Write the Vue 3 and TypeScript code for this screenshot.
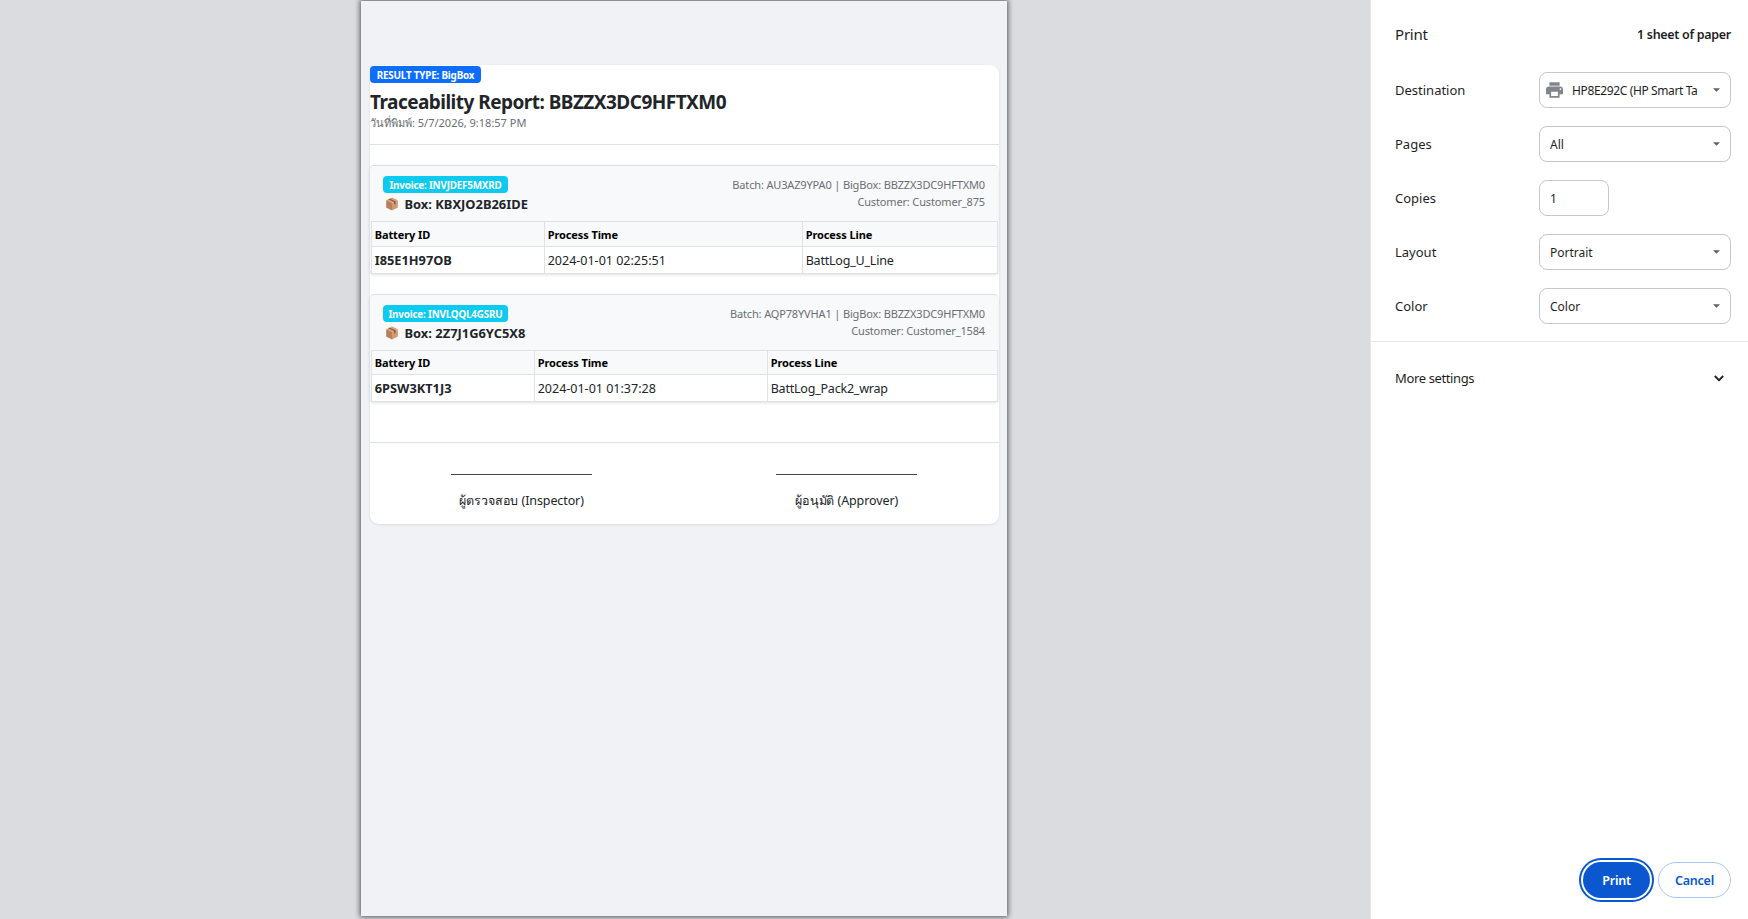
<script setup lang="ts">
interface BoxRecord {
  invoice: string
  box: string
  batch: string
  customer: string
  batteryId: string
  time: string
  line: string
}

interface Setting {
  label: string
  value: string
  kind: 'printer' | 'select' | 'input'
}

const bigBox = 'BBZZX3DC9HFTXM0'

const records: BoxRecord[] = [
  {
    invoice: 'INVJDEF5MXRD',
    box: 'KBXJO2B26IDE',
    batch: 'AU3AZ9YPA0',
    customer: 'Customer_875',
    batteryId: 'I85E1H97OB',
    time: '2024-01-01 02:25:51',
    line: 'BattLog_U_Line',
  },
  {
    invoice: 'INVLQQL4GSRU',
    box: '2Z7J1G6YC5X8',
    batch: 'AQP78YVHA1',
    customer: 'Customer_1584',
    batteryId: '6PSW3KT1J3',
    time: '2024-01-01 01:37:28',
    line: 'BattLog_Pack2_wrap',
  },
]

const settings: Setting[] = [
  { label: 'Destination', value: 'HP8E292C (HP Smart Ta', kind: 'printer' },
  { label: 'Pages', value: 'All', kind: 'select' },
  { label: 'Copies', value: '1', kind: 'input' },
  { label: 'Layout', value: 'Portrait', kind: 'select' },
  { label: 'Color', value: 'Color', kind: 'select' },
]
</script>

<template>
  <div class="dialog">
    <main class="preview">
      <div class="sheet">
        <article class="report">
          <header class="report-head">
            <span class="badge primary">RESULT TYPE: BigBox</span>
            <h1>Traceability Report: {{ bigBox }}</h1>
            <p class="printed">วันที่พิมพ์: 5/7/2026, 9:18:57 PM</p>
          </header>

          <section v-for="(r, i) in records" :key="r.box" class="block" :class="'block-' + i">
            <div class="block-head">
              <div class="block-id">
                <span class="badge info">Invoice: {{ r.invoice }}</span>
                <div class="box-name">
                  <svg class="parcel" viewBox="0 0 24 24">
                    <path d="M12 1 L22 5.5 L12 10 L2 5.5Z" fill="#d6a178" />
                    <path d="M2 5.5 L12 10 V23 L2 18Z" fill="#b87f5b" />
                    <path d="M12 10 L22 5.5 V18 L12 23Z" fill="#d09a72" />
                    <path d="M5.5 4 L15.5 8.5 V13 L18 12 V7.3 L8 2.8Z" fill="#8a5a40" />
                  </svg>
                  <span>Box: {{ r.box }}</span>
                </div>
              </div>
              <div class="block-meta">
                <div>Batch: {{ r.batch }} | BigBox: {{ bigBox }}</div>
                <div>Customer: {{ r.customer }}</div>
              </div>
            </div>
            <div class="grid">
              <div class="cell th">Battery ID</div>
              <div class="cell th">Process Time</div>
              <div class="cell th">Process Line</div>
              <div class="cell td strong">{{ r.batteryId }}</div>
              <div class="cell td">{{ r.time }}</div>
              <div class="cell td line-name">{{ r.line }}</div>
            </div>
          </section>

          <footer class="signatures">
            <div class="sign">
              <div class="rule"></div>
              <div>ผู้ตรวจสอบ (Inspector)</div>
            </div>
            <div class="sign">
              <div class="rule"></div>
              <div>ผู้อนุมัติ (Approver)</div>
            </div>
          </footer>
        </article>
      </div>
    </main>

    <aside class="panel">
      <header class="panel-head">
        <span class="panel-title">Print</span>
        <span class="count">1 sheet of paper</span>
      </header>
      <div class="settings">
        <div v-for="s in settings" :key="s.label" class="row">
          <span class="label">{{ s.label }}</span>
          <div class="control" :class="s.kind">
            <svg v-if="s.kind === 'printer'" class="printer-icon" viewBox="2 3 20 18">
              <path
                d="M19 8H5c-1.66 0-3 1.34-3 3v6h4v4h12v-4h4v-6c0-1.66-1.34-3-3-3zm-3 11H8v-5h8v5zm3-7c-.55 0-1-.45-1-1s.45-1 1-1 1 .45 1 1-.45 1-1 1zm-1-9H6v4h12V3z"
              />
            </svg>
            <span class="value">{{ s.value }}</span>
            <svg v-if="s.kind !== 'input'" class="arrow" viewBox="0 0 8 4">
              <path d="M0 0H8L4 4Z" />
            </svg>
          </div>
        </div>
      </div>
      <div class="more">
        <span>More settings</span>
        <svg class="chevron" viewBox="0 0 10 7"><path d="M.8 1 L5 5.2 L9.2 1" /></svg>
      </div>
      <div class="actions">
        <button class="btn print">Print</button>
        <button class="btn cancel">Cancel</button>
      </div>
    </aside>
  </div>
</template>

<style>
body {
  margin: 0;
  overflow: hidden;
}
</style>

<style scoped>
* {
  box-sizing: border-box;
}
.dialog {
  display: flex;
  width: 1748px;
  height: 919px;
  background: #fff;
  font-family: 'Noto Sans', 'Open Sans', sans-serif;
  color: #212529;
}
.preview {
  flex: 1;
  display: flex;
  padding: 1px 0 0 361px;
  background: #dadce0;
  border-right: 1px solid #e6e7ea;
  overflow: hidden;
}
.sheet {
  width: 646px;
  height: 915px;
  padding: 63.5px 8px 0 9px;
  background: #f0f2f5;
  box-shadow: 0 0 5px 1px rgba(50, 50, 55, 0.8);
}
.report {
  height: 459.5px;
  background: #fff;
  border-radius: 9px;
  box-shadow: 0 1px 3px rgba(0, 0, 0, 0.09);
  white-space: nowrap;
}
.report-head {
  height: 80px;
  padding-top: 1.5px;
  border-bottom: 1px solid #dee2e6;
}
.badge {
  display: block;
  height: 17px;
  border-radius: 4px;
  color: #fff;
  font-size: 9.9px;
  font-weight: 700;
  line-height: 19px;
  letter-spacing: -0.2px;
  text-align: center;
}
.primary {
  width: 111px;
  background: #0d6efd;
}
h1 {
  margin: 7px 0 0;
  font-size: 19px;
  line-height: 25px;
  font-weight: 700;
  letter-spacing: -0.53px;
}
.printed {
  margin: 0;
  font-size: 11px;
  line-height: 16px;
  color: #6a6f75;
}
.block {
  width: 628px;
  height: 108px;
  margin-top: 20.5px;
  border-top: 1px solid #dcdee1;
  border-radius: 4px;
  background: #f8f9fa;
  box-shadow: 0 2px 3px rgba(0, 0, 0, 0.12);
}
.block-1 {
  height: 107px;
  margin-top: 21px;
}
.block-head {
  height: 55px;
  padding: 10px 13px 0;
  display: flex;
  justify-content: space-between;
}
.block-1 .block-head {
  padding-top: 9.5px;
}
.info {
  width: 125px;
  background: #0dcaf0;
}
.box-name {
  display: flex;
  align-items: center;
  height: 20px;
  margin-top: 1px;
  padding-left: 2px;
  font-size: 12.9px;
  font-weight: 700;
}
.block-1 .box-name {
  margin-top: 1.5px;
}
.parcel {
  width: 14px;
  height: 14px;
  margin-right: 5.5px;
}
.block-meta {
  font-size: 11px;
  line-height: 17px;
  letter-spacing: -0.15px;
  text-align: right;
  color: #6a6f75;
}
.grid {
  display: grid;
  grid-template-columns: 173px 258px 195px;
  grid-template-rows: 25px 27px;
  width: 627px;
  margin-left: 1px;
  border-top: 1px solid #dee2e6;
  border-left: 1px solid #dee2e6;
}
.block-1 .grid {
  grid-template-columns: 163px 233px 230px;
  grid-template-rows: 24px 27px;
}
.cell {
  padding-left: 2.7px;
  border-right: 1px solid #dee2e6;
  border-bottom: 1px solid #dee2e6;
}
.th {
  font-size: 11px;
  font-weight: 700;
  line-height: 26px;
  letter-spacing: -0.1px;
  color: #000;
}
.block-1 .th {
  line-height: 24px;
}
.td {
  font-size: 12.5px;
  line-height: 27px;
  background: #fff;
}
.line-name {
  letter-spacing: -0.21px;
}
.strong {
  font-size: 12.8px;
  font-weight: 700;
}
.signatures {
  display: flex;
  justify-content: space-between;
  height: 82px;
  margin-top: 40.5px;
  padding: 31.5px 82px 0 81px;
  border-top: 1px solid #dee2e6;
}
.sign {
  width: 141px;
  font-size: 12.5px;
  line-height: 20px;
  letter-spacing: -0.1px;
  text-align: center;
}
.rule {
  height: 1px;
  margin-bottom: 16px;
  background: #44484b;
}
.panel {
  width: 377px;
  height: 919px;
  display: flex;
  flex-direction: column;
  font-size: 13px;
  color: #1f1f1f;
}
.panel-head {
  display: flex;
  justify-content: space-between;
  align-items: center;
  height: 68px;
  padding: 0 17px 0 24px;
}
.panel-title {
  font-size: 15px;
  letter-spacing: -0.2px;
}
.count {
  font-weight: 600;
  font-size: 12.5px;
  letter-spacing: -0.3px;
}
.settings {
  display: flex;
  flex-direction: column;
  gap: 18px;
  height: 274px;
  padding: 4px 17px 0 24px;
  border-bottom: 1px solid #e8e8e8;
}
.row {
  display: flex;
  align-items: center;
  height: 36px;
}
.label {
  width: 144px;
}
.control {
  display: flex;
  align-items: center;
  width: 192px;
  height: 36px;
  padding: 0 10px;
  border: 1px solid #c7c7c7;
  border-radius: 8px;
  font-size: 12px;
}
.input {
  width: 70px;
}
.printer {
  padding-left: 5.5px;
  letter-spacing: -0.37px;
}
.printer-icon {
  width: 17px;
  height: 16px;
  margin-right: 9.5px;
  fill: #80868b;
}
.value {
  flex: 1;
  white-space: nowrap;
}
.arrow {
  width: 7px;
  height: 4px;
  fill: #5f6368;
}
.more {
  display: flex;
  justify-content: space-between;
  align-items: center;
  height: 72px;
  padding: 0 24px;
  letter-spacing: -0.37px;
}
.chevron {
  width: 10px;
  height: 7px;
  fill: none;
  stroke: #1f1f1f;
  stroke-width: 1.8;
}
.actions {
  display: flex;
  gap: 8px;
  justify-content: flex-end;
  margin-top: auto;
  padding: 0 17px 21px 0;
}
.btn {
  height: 36px;
  padding: 0;
  border-radius: 18px;
  font: 600 12.5px 'Noto Sans', sans-serif;
  letter-spacing: -0.25px;
}
.print {
  width: 67px;
  border: 0;
  background: #0b57d0;
  color: #fff;
  box-shadow: 0 0 0 2px #fff, 0 0 0 4px #0b57d0;
}
.cancel {
  width: 73px;
  border: 1px solid #a8c7fa;
  background: #fff;
  color: #0b57d0;
}
</style>
